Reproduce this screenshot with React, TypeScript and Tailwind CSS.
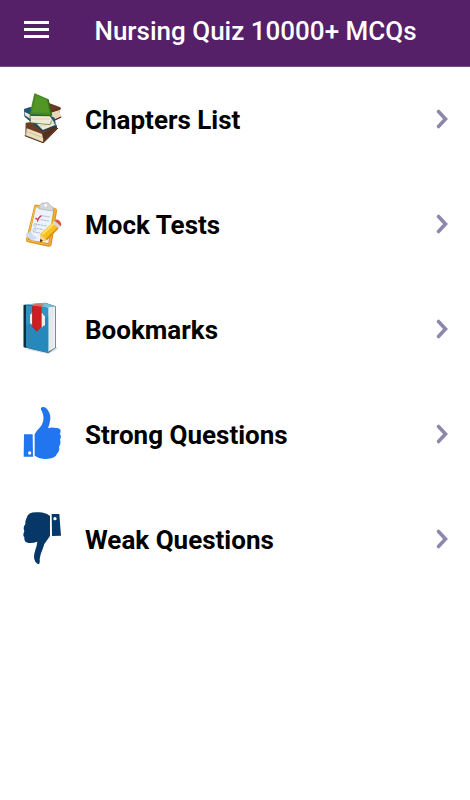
import type { ReactNode } from "react";

function Books() {
  return (
    <svg viewBox="0 6 180 195" className="h-[65px] w-[60px] shrink-0" aria-hidden="true">
      <path d="M35 113 84 107 128 124 88 172 34 151Z" fill="#6b3d24" />
      <path d="M38 130 86 148 90 160 86 171 36 151Z" fill="#eadfbd" />
      <path d="M37 139 87 158" stroke="#c3b18c" strokeWidth="2" />
      <path d="M84 148 127 121 130 130 90 170Z" fill="#54301d" />
      <path d="M32 152 87 173 92 170 132 129" fill="none" stroke="#4a2410" strokeWidth="3" />
      <path d="M105 54 139 67 141 72 136 76 140 98 112 111 96 90Z" fill="#693820" />
      <path d="M110 82 136 74 140 95 110 108Z" fill="#e8d8ba" />
      <path d="M110 82 137 73M112 110 142 96" stroke="#532a17" strokeWidth="3" />
      <path d="M48 66 30 72 31 93 86 137 126 121 122 98 60 70Z" fill="#205577" />
      <path d="M32 81 51 90 48 101 33 91ZM68 116 118 108 123 120 87 135Z" fill="#f0ead5" />
      <path d="M78 123 120 115" stroke="#c4c9bf" strokeWidth="2" />
      <path d="M32 94 85 138 129 122" fill="none" stroke="#143b5a" strokeWidth="3" />
      <path d="M49 91 105 89 117 108 108 118 50 113Z" fill="#f1e9d4" />
      <path d="M50 102 108 102" stroke="#d4c6aa" strokeWidth="2" />
      <path d="M62 25 102 42 112 91 48 88Z" fill="#478920" />
      <path d="M66 31 98 45 106 83 54 82Z" fill="#579b29" opacity=".7" />
      <path d="M62 26 48 89 48 113 108 119 113 107" fill="none" stroke="#3b7c1b" strokeWidth="2" />
      <path d="M49 91 111 92M102 43 113 92" stroke="#2f6917" strokeWidth="4" />
    </svg>
  );
}

function Clipboard() {
  return (
    <svg viewBox="0 -6 180 195" className="h-[65px] w-[60px] shrink-0" aria-hidden="true">
      <path d="M61 34Q63 30 69 32L123 42Q130 44 129 51L113 152Q111 160 103 158L42 145Q35 143 36 137Z" fill="#dd951b" />
      <path d="M64 36 124 46 107 153 40 139Z" fill="none" stroke="#f5c04c" strokeWidth="3" />
      <path d="M66 40 118 48 103 147 53 139 34 122Q48 119 50 112Z" fill="#edf3fb" />
      <path d="M50 112 34 122 50 137Q67 139 68 129Q56 127 50 112Z" fill="#cddcf0" />
      <path d="M80 31Q84 24 92 28Q103 21 107 34L119 41 115 51 74 44 76 34Z" fill="#d3d6da" stroke="#a8aeb5" strokeWidth="2" />
      <circle cx="95" cy="34" r="4" fill="#fff" />
      <path d="M82 65 108 69M80 77 105 81M62 90 99 96M60 102 88 107M57 113 78 117" stroke="#a9bad3" strokeWidth="3" strokeDasharray="7 2" />
      <path d="M62 88 69 90 65 97 58 95ZM59 104 66 105 63 112 56 110Z" fill="none" stroke="#b6bfd0" strokeWidth="2" />
      <path d="M64 74Q69 72 71 79Q75 69 82 65" fill="none" stroke="#d6304b" strokeWidth="4" />
      <path d="M79 119 118 84 134 102 97 139 78 144Z" fill="#f8be22" />
      <path d="M85 121 121 88" stroke="#ffe066" strokeWidth="6" />
      <path d="M97 137 132 102" stroke="#df8c0c" strokeWidth="5" />
      <path d="M79 121 96 137 78 144Z" fill="#f3d4a1" />
      <path d="M80 134 87 141 77 145Z" fill="#333" />
      <path d="M115 86 122 80 140 97 134 103Z" fill="#d4d9df" />
      <path d="M122 80Q127 73 135 79Q145 87 140 97Z" fill="#e0553b" />
    </svg>
  );
}

function BookmarkBook() {
  return (
    <svg viewBox="0 6 180 195" className="h-[65px] w-[60px] shrink-0" aria-hidden="true">
      <path d="M35 162 103 177 131 161 126 155Z" fill="#bfc3c6" opacity=".6" />
      <path d="M29 29 94 23 125 34 125 158 103 174 29 157Z" fill="#155d80" />
      <path d="M96 37 123 34 123 158 102 171Z" fill="#edf1f3" />
      <path d="M108 38 108 165M115 37 115 161" stroke="#d3dade" strokeWidth="2" />
      <path d="M33 28 94 24 123 33 101 38Z" fill="#78bbda" />
      <path d="M36 31 103 38 103 173 36 157Z" fill="#2f93c4" />
      <path d="M36 90 103 64 103 173 36 157Z" fill="#1f80b4" opacity=".55" />
      <path d="M29 30 36 31 36 158 29 155Z" fill="#122d3a" />
      <path d="M54 52 86 55Q87 61 93 64L93 91Q86 92 85 97L55 93Q54 87 48 85L48 59Q54 57 54 52Z" fill="#f0eee6" />
      <path d="M55 32 83 34 83 96 69 110 55 95Z" fill="#cc1f24" />
      <path d="M54 31 64 26 91 29 82 35Z" fill="#ed6058" />
      <path d="M56 34 56 94 69 108" fill="none" stroke="#9c1018" strokeWidth="2" />
    </svg>
  );
}

function ThumbUp() {
  return (
    <svg viewBox="0 6 180 195" className="h-[65px] w-[60px] shrink-0" fill="#2176ef" aria-hidden="true">
      <path d="M83 22Q90 19 96 24Q110 37 109 57Q107 73 102 85Q112 80 127 84Q140 85 140 93Q140 99 137 102Q144 108 138 119Q142 130 135 140Q138 151 130 160Q123 179 90 177Q75 176 62 167L62 103Q69 90 77 83Q91 68 88 47Q86 35 81 29Q79 24 83 22Z" />
      <path fillRule="evenodd" d="M30 103 56 103 57 170 29 170ZM47 154A5 5 0 1 0 47 164A5 5 0 1 0 47 154Z" />
    </svg>
  );
}

function ThumbDown() {
  return (
    <svg viewBox="0 6 180 195" className="h-[65px] w-[60px] shrink-0" fill="#063767" aria-hidden="true">
      <path d="M108 33Q91 20 71 22Q43 20 38 38Q32 49 34 58Q26 67 31 79Q25 91 31 97Q29 112 43 114Q58 115 70 110Q69 121 64 135Q58 153 61 163Q63 174 72 178Q79 178 77 162Q79 147 86 132Q90 115 99 106Q103 101 108 92Z" />
      <path fillRule="evenodd" d="M113 27 136 27Q138 55 141 92L114 93ZM123 36A5 5 0 1 0 123 46A5 5 0 1 0 123 36Z" />
    </svg>
  );
}

const items: { label: string; icon: ReactNode }[] = [
  { label: "Chapters List", icon: <Books /> },
  { label: "Mock Tests", icon: <Clipboard /> },
  { label: "Bookmarks", icon: <BookmarkBook /> },
  { label: "Strong Questions", icon: <ThumbUp /> },
  { label: "Weak Questions", icon: <ThumbDown /> },
];

export default function App() {
  return (
    <div className="min-h-screen bg-white font-['Roboto',sans-serif]">
      <header className="flex h-[67px] items-center border-b border-[#785083] bg-[#552067] px-6 pb-1">
        <button type="button" aria-label="Open menu" className="flex w-[25px] shrink-0 flex-col gap-1 pb-1">
          <span className="h-[3px] bg-white" />
          <span className="h-[3px] bg-white" />
          <span className="h-[3px] bg-white" />
        </button>
        <h1 className="flex-1 pl-4 text-center text-[26px] leading-8 font-medium whitespace-nowrap text-white">
          Nursing Quiz 10000+ MCQs
        </h1>
      </header>
      <main>
        <ul>
          {items.map((item) => (
            <li key={item.label}>
              <button type="button" className="flex h-[105px] w-full items-center gap-[11px] px-3.5 text-left">
                {item.icon}
                <span className="flex-1 text-[26px] leading-8 font-bold text-black">{item.label}</span>
                <svg viewBox="0 0 28 28" className="size-7 shrink-0" fill="none" stroke="#8c88ac" strokeWidth="3.6" strokeLinecap="round" aria-hidden="true">
                  <path d="M10.5 5.5 17.5 13 10.5 20.5" />
                </svg>
              </button>
            </li>
          ))}
        </ul>
      </main>
    </div>
  );
}
